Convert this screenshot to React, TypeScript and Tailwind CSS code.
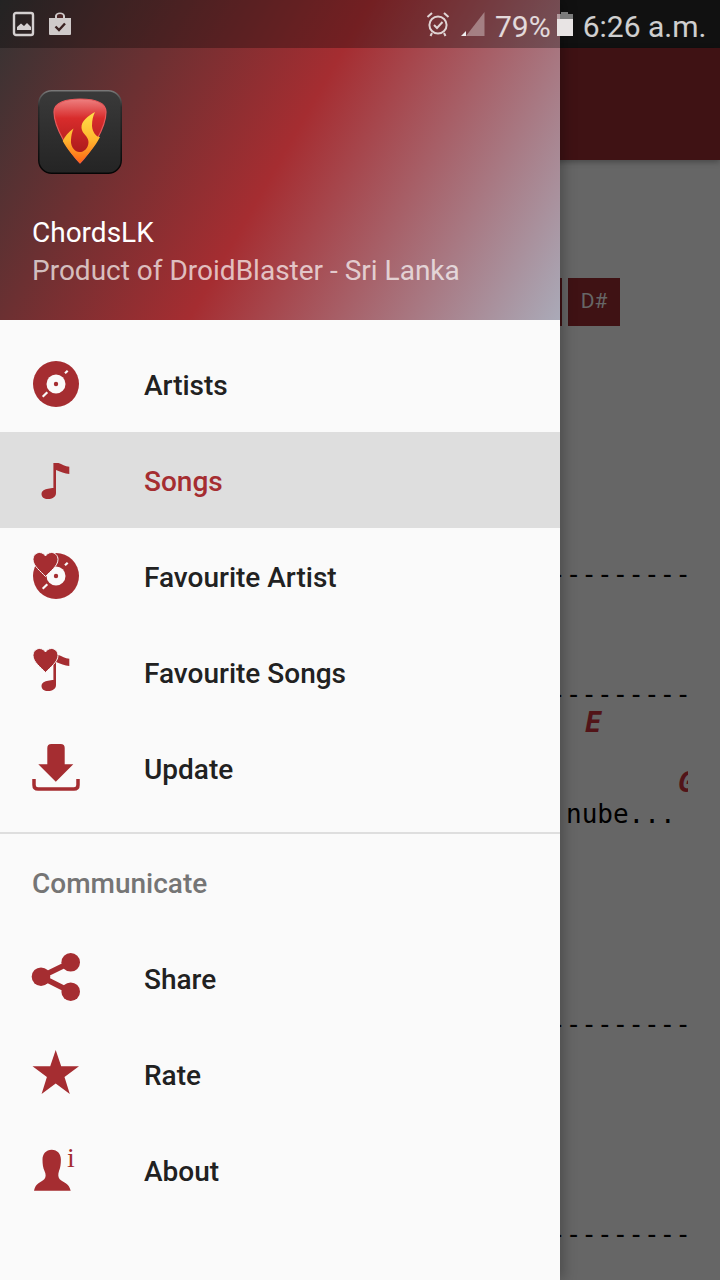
const RED = "#a52d31";

function Note() {
  return (
    <path
      fill={RED}
      d="M21.4 7 L26.5 7 C30 8 33 10.6 37.3 10.7 L37.3 18 C33 18 28 15.5 24 14 L24 37 C24 41 20 43 16 43 C12 43 9.5 41 9.5 38 C9.5 34.5 13 33 16 32.7 C18 32.4 20 32 21.4 32 Z"
    />
  );
}

function Heart() {
  return (
    <path
      fill={RED}
      stroke="#fafafa"
      strokeWidth="1"
      d="M13.5 24.5 C9 19.5 1 14 1 7.5 C1 3.5 4 0.5 7.5 0.5 C10 0.5 12.5 2 13.5 4 C14.5 2 17 0.5 19.5 0.5 C23 0.5 26 3.5 26 7.5 C26 14 18 19.5 13.5 24.5 Z"
    />
  );
}

function Disc() {
  return (
    <>
      <circle cx="24" cy="24" r="23" fill={RED} />
      <circle cx="24" cy="24" r="9.5" fill="#fafafa" />
      <circle cx="24" cy="24" r="2.2" fill={RED} />
      <path d="M35.7 10.7 L33 13.3 M15.3 32.3 L10.7 36.8" stroke="#fafafa" strokeWidth="2.2" />
    </>
  );
}

function IconBox({ children }: { children: React.ReactNode }) {
  return (
    <svg width="48" height="48" viewBox="0 0 48 48" className="shrink-0 overflow-visible">
      {children}
    </svg>
  );
}

function Person() {
  return (
    <>
      <path
        fill={RED}
        d="M19.7 3.7 C25.5 3.7 28.9 8 28.9 13.5 C28.9 18 28.4 22 27 25 C26 28 26 31 27.5 33 C31 36.5 37 37 38.7 44.7 L2 44.7 C3.5 37 9 36.5 12.5 33 C14 31 14 28 12.5 25 C11 22 10.5 18 10.5 13.5 C10.5 8 14 3.7 19.7 3.7 Z"
      />
      <text x="35" y="21" fill={RED} fontSize="28" fontFamily="'Liberation Serif', serif">
        i
      </text>
    </>
  );
}

function Row({ label, icon, active }: { label: string; icon: React.ReactNode; active?: boolean }) {
  return (
    <div className={`flex h-24 items-center gap-16 pl-8 ${active ? "bg-[#dedede]" : ""}`}>
      <IconBox>{icon}</IconBox>
      <span className={`pt-1 text-[28px] font-medium ${active ? "text-[#a52d31]" : "text-[#212121]"}`}>{label}</span>
    </div>
  );
}

function Logo() {
  return (
    <svg width="84" height="84" viewBox="0 0 84 84" className="ml-[38px] block">
      <defs>
        <linearGradient id="pick" x1="0" y1="0" x2="0" y2="1">
          <stop offset="0" stopColor="#ee8080" />
          <stop offset="0.3" stopColor="#d82c2c" />
          <stop offset="1" stopColor="#a01616" />
        </linearGradient>
        <linearGradient id="flame" x1="0" y1="0" x2="0" y2="1">
          <stop offset="0" stopColor="#ffe14a" />
          <stop offset="0.55" stopColor="#ffb52e" />
          <stop offset="1" stopColor="#ff6414" />
        </linearGradient>
        <linearGradient id="tile" x1="0" y1="0" x2="0" y2="1">
          <stop offset="0" stopColor="#3a3a3a" />
          <stop offset="1" stopColor="#242424" />
        </linearGradient>
        <linearGradient id="rim" x1="0" y1="0" x2="0" y2="1">
          <stop offset="0" stopColor="#777777" />
          <stop offset="0.2" stopColor="#2a2a2a" />
          <stop offset="1" stopColor="#050505" />
        </linearGradient>
      </defs>
      <rect x="0.75" y="0.75" width="82.5" height="82.5" rx="13" fill="url(#tile)" stroke="url(#rim)" strokeWidth="1.5" />
      <path
        fill="url(#pick)"
        stroke="#e8585a"
        strokeWidth="1.2"
        d="M42 9 C55 9 68 12 68 22 C68 38 52 63 42 73 C32 63 16 38 16 22 C16 12 29 9 42 9 Z"
      />
      <path
        fill="url(#flame)"
        d="M57 22 C50 26 43 31 43.5 38 C44 44 50.5 46 50.5 52 C50.5 59 45 62.5 41 62 C35 61 32.5 55 33 50 C33.2 46 34 42 35.5 38.5 C30.5 42 27 46 24.7 51 C29 59 36 67 42 73 C48 67 57 57 62 47 C58 47 54.5 42 54 36 C54 30 55 26 57 22 Z"
      />
    </svg>
  );
}

function StatusBar() {
  return (
    <div className="absolute inset-x-0 top-0 flex h-12 items-center text-[30px] text-white/80">
      <svg width="24" height="26" viewBox="0 0 24 26" className="ml-[12px]">
        <rect x="2" y="2" width="19" height="22" rx="2" fill="none" stroke="#d4d0d0" strokeWidth="2.4" />
        <path d="M5 19 L5 16 L9 12.5 L12 15 L15 12 L19 16 L19 19 Z" fill="#d4d0d0" />
      </svg>
      <svg width="26" height="26" viewBox="0 0 26 26" className="ml-[11px]">
        <path d="M2 7 H8 V5 a5 3.5 0 0 1 10 0 V7 H24 V23 a1 1 0 0 1 -1 1 H3 a1 1 0 0 1 -1 -1 Z" fill="#cfcaca" />
        <path d="M10 7 V5 a3 2 0 0 1 6 0 V7 Z" fill="#4a2626" />
        <path d="M8.5 15.5 L12 19 L18 12.5" fill="none" stroke="#3a2222" strokeWidth="2.4" />
      </svg>
      <svg width="24" height="26" viewBox="0 0 24 26" className="ml-[353px]">
        <circle cx="12" cy="14" r="8.6" fill="none" stroke="#e0d4d4" strokeWidth="2" />
        <path d="M8 14 L11 17 L16.5 11" fill="none" stroke="#e0d4d4" strokeWidth="2" />
        <path d="M1.5 6 L6 2 M22.5 6 L18 2 M6 22 L4.5 25 M18 22 L19.5 25" stroke="#e0d4d4" strokeWidth="2" />
      </svg>
      <svg width="26" height="26" viewBox="0 0 26 26" className="ml-[10px]">
        <path d="M24.5 1 V25 H6 Z" fill="#ffffff" fillOpacity="0.35" />
        <path d="M1 25 L6 20 V25 Z" fill="#eeeeee" />
      </svg>
      <span className="ml-[9px] pt-[5px] font-['Roboto',sans-serif] leading-none">79%</span>
      <svg width="18" height="26" viewBox="0 0 18 26" className="ml-[5px]">
        <path d="M5 1 H12 V3 H17 V8 H1 V3 H5 Z" fill="#ffffff" fillOpacity="0.45" />
        <rect x="1" y="8" width="16" height="17" fill="#e8e4e4" />
      </svg>
      <span className="ml-[9px] pt-[5px] font-['Roboto',sans-serif] leading-none">6:26 a.m.</span>
    </div>
  );
}

function DashLine({ top }: { top: string }) {
  return <div className={`${top} -ml-[10px] h-5 text-[26px] leading-5 whitespace-nowrap text-black`}>---------</div>;
}

function Backdrop() {
  return (
    <div className="flex h-full flex-col bg-[#666666] font-['DejaVu_Sans_Mono',monospace]">
      <div className="h-12 bg-[#111111]" />
      <div className="h-28 bg-[#3f1214] shadow-[0_2px_6px_rgba(0,0,0,0.3)]" />
      <div className="pl-[560px]">
        <div className="mt-[118px] flex h-12 gap-[6px]">
          <div className="w-[2px] bg-[#3f1214]" />
          <div className="flex w-[52px] items-center justify-center bg-[#3f1214] font-['Roboto',sans-serif] text-[21px] text-[#666666]">
            D#
          </div>
        </div>
        <DashLine top="mt-[238px]" />
        <DashLine top="mt-[100px]" />
        <div className="mt-[4px] pl-[25px] text-[28px] leading-[30px] font-bold text-[#521418] italic">E</div>
        <div className="mt-[30px] h-[30px] w-32 overflow-hidden pl-[118px] text-[28px] leading-[30px] font-bold text-[#521418] italic">
          G
        </div>
        <div className="mt-[1px] pl-[6px] text-[26px] leading-[30px] text-black">nube...</div>
        <DashLine top="mt-[185px]" />
        <DashLine top="mt-[190px]" />
      </div>
    </div>
  );
}

export default function App() {
  return (
    <div className="relative h-[1280px] w-[720px] overflow-hidden">
      <Backdrop />
      <div className="absolute inset-y-0 left-0 w-[560px] bg-[#fafafa] font-['Roboto',sans-serif] shadow-[4px_0_12px_rgba(0,0,0,0.25)]">
        <div className="h-80 bg-[linear-gradient(119.7deg,#333333,#a52d31_50%,#aaaab8)] pt-[90px]">
          <Logo />
          <div className="mt-10 pl-8 text-[28px] leading-[38px]">
            <div className="text-white">ChordsLK</div>
            <div className="text-white/70">Product of DroidBlaster - Sri Lanka</div>
          </div>
        </div>
        <div className="pt-4">
          <Row label="Artists" icon={<Disc />} />
          <Row label="Songs" icon={<Note />} active />
          <Row
            label="Favourite Artist"
            icon={
              <>
                <Disc />
                <Heart />
              </>
            }
          />
          <Row
            label="Favourite Songs"
            icon={
              <>
                <Note />
                <Heart />
              </>
            }
          />
          <Row
            label="Update"
            icon={
              <>
                <path
                  fill={RED}
                  d="M15.3 4 a4 4 0 0 1 4 -4 h9.4 a4 4 0 0 1 4 4 V20.3 H41.3 L23.8 37.7 L6.3 20.3 H15.3 Z"
                />
                <path
                  fill="none"
                  stroke={RED}
                  strokeWidth="3.5"
                  d="M2 35 V41 C2 44 3.5 45 6 45 H42 C44.5 45 46 44 46 41 V35"
                />
              </>
            }
          />
        </div>
        <div className="mt-4 h-[2px] bg-[#dedede]" />
        <div className="flex h-24 items-center pt-1 pl-8 text-[28px] font-medium text-[#757575]">Communicate</div>
        <Row
          label="Share"
          icon={
            <>
              <path d="M38.7 8.3 L9 22.7 L38.7 37.7" fill="none" stroke={RED} strokeWidth="5.5" />
              <circle cx="38.7" cy="8.3" r="9.3" fill={RED} />
              <circle cx="38.7" cy="37.7" r="9.3" fill={RED} />
              <circle cx="9" cy="22.7" r="9.3" fill={RED} />
            </>
          }
        />
        <Row
          label="Rate"
          icon={
            <polygon
              fill={RED}
              points="23.7,0 29.2,16.3 47,16.3 32.5,27 37.8,44 23.7,33.5 9.6,44 14.9,27 0.5,16.3 18.2,16.3"
            />
          }
        />
        <Row label="About" icon={<Person />} />
      </div>
      <div className="absolute inset-x-0 top-0 h-12 w-[560px] bg-black/30" />
      <StatusBar />
    </div>
  );
}
